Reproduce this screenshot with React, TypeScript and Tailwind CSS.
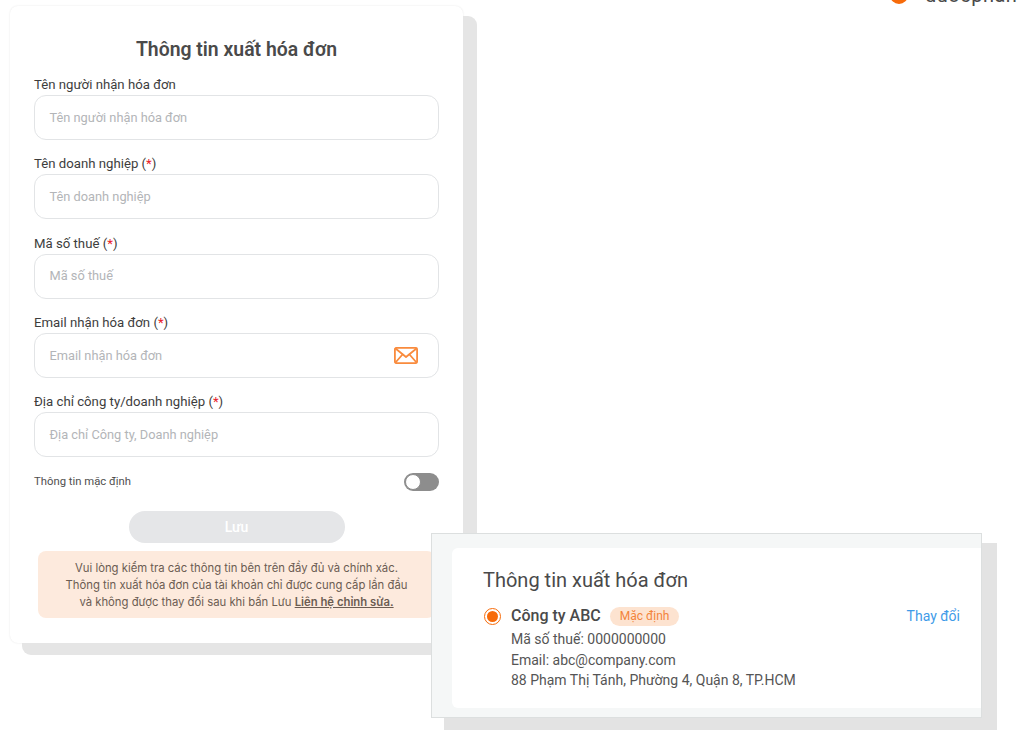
const fields = [
  { label: "Tên người nhận hóa đơn", placeholder: "Tên người nhận hóa đơn", required: false },
  { label: "Tên doanh nghiệp", placeholder: "Tên doanh nghiệp", required: true },
  { label: "Mã số thuế", placeholder: "Mã số thuế", required: true },
  { label: "Email nhận hóa đơn", placeholder: "Email nhận hóa đơn", required: true, icon: true },
  { label: "Địa chỉ công ty/doanh nghiệp", placeholder: "Địa chỉ Công ty, Doanh nghiệp", required: true },
];

function EnvelopeIcon() {
  return (
    <svg width="24" height="17" viewBox="0 0 24 17" fill="none" stroke="#f98b3d" strokeWidth="1.8" strokeLinejoin="round" strokeLinecap="round">
      <rect x="0.9" y="0.9" width="22.2" height="15.2" rx="1.5" />
      <path d="M1.5 1.5 L12 10 L22.5 1.5" />
      <path d="M1.5 15.5 L8.5 7.5 M22.5 15.5 L15.5 7.5" />
    </svg>
  );
}

function Field({ label, placeholder, required, icon }: { label: string; placeholder: string; required: boolean; icon?: boolean }) {
  return (
    <div className="flex flex-col">
      <label className="h-[22px] text-[13.2px] leading-[24px] font-normal text-[#3d3d3d]">
        {label}
        {required && (
          <span>
            {" "}
            (<span className="text-[#e8202a]">*</span>)
          </span>
        )}
      </label>
      <div className="flex h-[45px] items-center justify-between rounded-[12px] border border-[#e2e4e6] bg-white pr-[20px] pl-[14.5px]">
        <span className="text-[12.8px] text-[#b3b5b8]">{placeholder}</span>
        {icon && <EnvelopeIcon />}
      </div>
    </div>
  );
}

function InvoiceForm() {
  return (
    <div className="absolute top-[6px] left-[10px] flex h-[637px] w-[453px] flex-col rounded-[8px] bg-white px-[24px] pt-[31px] shadow-[13px_11px_0_1px_#e5e5e5,0_0_2px_#e5e5e5]">
      <h1 className="text-center text-[19.4px] leading-[26px] font-semibold text-[#4a4a4a]">Thông tin xuất hóa đơn</h1>
      <div className="mt-[10px] flex flex-col gap-[12.25px]">
        {fields.map((f) => (
          <Field key={f.label} {...f} />
        ))}
      </div>
      <div className="mt-[16px] flex items-center justify-between">
        <span className="pt-[1px] text-[11.3px] text-[#4f4f4f]">Thông tin mặc định</span>
        <div className="flex h-[18px] w-[35px] items-center rounded-full bg-[#8d8d8d] pl-[1px]">
          <div className="h-[16px] w-[16px] rounded-full border border-[#8d8d8d] bg-white" />
        </div>
      </div>
      <button className="mx-auto mt-[20px] h-[32px] w-[216px] rounded-full bg-[#e5e6e8] text-[14px] font-medium text-white">Lưu</button>
      <div className="mx-[4px] mt-[8px] rounded-[8px] bg-[#fdeadd] pt-[9px] pb-[7px] text-center text-[11.3px] leading-[17px] text-[#6b5c52]" style={{ fontFamily: "Inter, sans-serif" }}>
        <p>Vui lòng kiểm tra các thông tin bên trên đầy đủ và chính xác.</p>
        <p>Thông tin xuất hóa đơn của tài khoản chỉ được cung cấp lần đầu</p>
        <p>
          và không được thay đổi sau khi bấn Lưu <a className="font-semibold underline">Liên hệ chỉnh sửa.</a>
        </p>
      </div>
    </div>
  );
}

function InvoiceSummary() {
  return (
    <div className="absolute top-[533px] left-[431px] h-[185px] w-[551px] border border-[#dcdfdf] bg-[#f5f7f7] pt-[14px] pl-[20px] shadow-[14px_11px_0_1px_#e3e3e3]">
      <div className="h-[160px] rounded-l-[6px] bg-white pt-[19px] pr-[21px] pl-[31px]">
        <h2 className="text-[20px] leading-[26px] text-[#4a4a4a]">Thông tin xuất hóa đơn</h2>
        <div className="mt-[12px] flex items-start justify-between">
          <div className="flex gap-[10px]">
            <div className="mt-[3px] ml-[1px] flex h-[17px] w-[17px] items-center justify-center rounded-full border-[1.5px] border-[#f76b0a]">
              <div className="h-[11px] w-[11px] rounded-full bg-[#f76b0a]" />
            </div>
            <div className="flex flex-col text-[14px] leading-[20.5px] text-[#555]">
              <div className="mb-[1px] flex h-[23px] items-center gap-[9px]">
                <span className="text-[16px] font-medium text-[#4a4a4a]">Công ty ABC</span>
                <span className="rounded-full bg-[#fde3d0] px-[10px] text-[12px] leading-[19px] text-[#f3843a]">Mặc định</span>
              </div>
              <span>Mã số thuế: 0000000000</span>
              <span>Email: abc@company.com</span>
              <span>88 Phạm Thị Tánh, Phường 4, Quận 8, TP.HCM</span>
            </div>
          </div>
          <a className="mt-[1px] text-[14px] leading-[21px] text-[#3f9be8]">Thay đổi</a>
        </div>
      </div>
    </div>
  );
}

export default function App() {
  return (
    <div className="relative h-[753px] w-[1020px] overflow-hidden bg-white" style={{ fontFamily: "Roboto, sans-serif" }}>
      <InvoiceForm />
      <InvoiceSummary />
      {/* clipped logo at the top edge */}
      <div className="absolute top-[-18px] left-[890px] flex items-center gap-[17px]">
        <div className="h-[18px] w-[18px] shrink-0 rounded-full bg-[#f76b0a]" />
        <span className="text-[20px] leading-[26px] tracking-[0.5px] text-[#4a4a4a]">duocphan</span>
      </div>
    </div>
  );
}
